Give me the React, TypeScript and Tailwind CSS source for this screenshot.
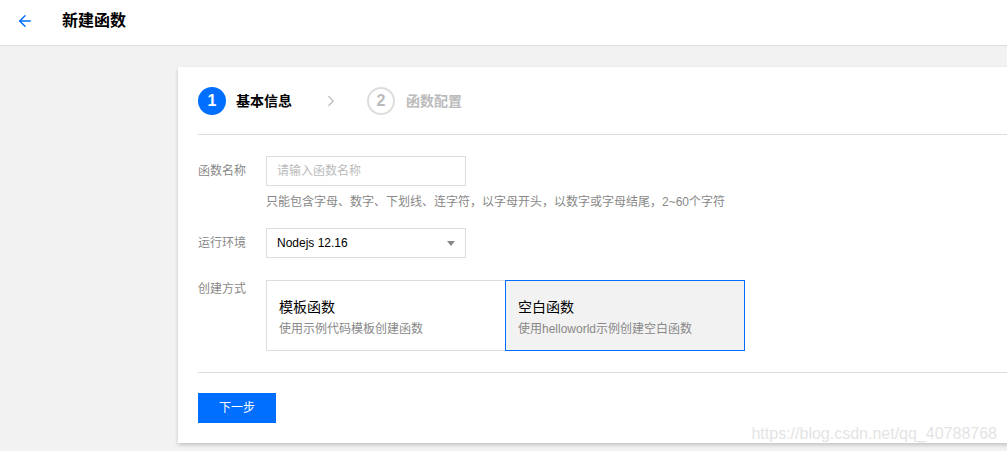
import { ArrowLeft, ChevronRight } from "lucide-react";

const FONT = "font-['Liberation_Sans','Noto_Sans_CJK_SC',sans-serif]";

function StepDot({ n, active }: { n: number; active?: boolean }) {
  return (
    <div
      className={`w-7 h-7 rounded-full flex items-center justify-center text-[16px] font-bold ${
        active ? "bg-[#006eff] text-white" : "border-2 border-[#ddd] text-[#bbb]"
      }`}
    >
      {n}
    </div>
  );
}

function ModeCard({ title, desc, selected }: { title: string; desc: string; selected?: boolean }) {
  return (
    <div
      className={`h-[71px] px-3 pt-[16px] ${
        selected ? "w-[240px] bg-[#f2f2f2] border border-[#006eff]" : "w-[239px] bg-white border border-[#ddd] border-r-0"
      }`}
    >
      <div className="text-[14px] leading-5 text-black">{title}</div>
      <div className="text-[12px] leading-5 mt-[2px] text-[#888]">{desc}</div>
    </div>
  );
}

export default function App() {
  return (
    <div className={`${FONT} relative w-[1007px] h-[451px] overflow-hidden bg-[#f2f2f2]`}>
      <div className="h-[46px] bg-white border-b border-[#ddd] flex items-center">
        <ArrowLeft className="ml-[16px] w-[18px] h-[18px] text-[#006eff] -mt-[4px]" strokeWidth={2} />
        <div className="ml-[28px] text-[16px] font-bold text-black -mt-[4px]">新建函数</div>
      </div>

      <div className="pl-[178px] pt-[21px]">
        <div className="w-[900px] h-[376px] bg-white shadow-[0_2px_4px_rgba(0,0,0,0.2)] pl-5 pt-5">
          <div className="flex items-center h-7">
            <StepDot n={1} active />
            <span className="ml-[10px] text-[14px] font-bold text-black">基本信息</span>
            <ChevronRight className="ml-[30px] w-[18px] h-[18px] text-[#bbb]" strokeWidth={1.6} />
            <div className="ml-[27px]">
              <StepDot n={2} />
            </div>
            <span className="ml-[11px] text-[14px] font-bold text-[#bbb]">函数配置</span>
          </div>
          <div className="mt-[19px] border-t border-[#ddd]" />

          <div className="mt-[21px] text-[12px]">
            <div className="flex">
              <div className="w-[68px] h-[30px] flex items-center text-[#888]">函数名称</div>
              <div>
                <div className="w-[200px] h-[30px] border border-[#ddd] px-[10px] flex items-center text-[#bbb]">
                  请输入函数名称
                </div>
                <div className="mt-[7px] leading-[18px] text-[#888]">
                  只能包含字母、数字、下划线、连字符，以字母开头，以数字或字母结尾，2~60个字符
                </div>
              </div>
            </div>

            <div className="flex mt-[17px]">
              <div className="w-[68px] h-[30px] flex items-center text-[#888]">运行环境</div>
              <div className="w-[200px] h-[30px] border border-[#ddd] pl-[10px] pr-[10px] flex items-center justify-between text-black">
                <span>Nodejs 12.16</span>
                <span className="w-0 h-0 border-l-[4px] border-r-[4px] border-t-[5px] border-l-transparent border-r-transparent border-t-[#888]" />
              </div>
            </div>

            <div className="flex mt-[22px]">
              <div className="w-[68px] leading-[18px] text-[#888]">创建方式</div>
              <div className="flex">
                <ModeCard title="模板函数" desc="使用示例代码模板创建函数" />
                <ModeCard title="空白函数" desc="使用helloworld示例创建空白函数" selected />
              </div>
            </div>
          </div>

          <div className="mt-[21px] border-t border-[#ddd]" />
          <button className="mt-[20px] w-[78px] h-[30px] bg-[#006eff] text-white text-[12px]">下一步</button>
        </div>
      </div>

      <div className="absolute right-[10px] top-[422px] text-[16px] text-[#e4e4e4] font-['Liberation_Sans',sans-serif]">
        https://blog.csdn.net/qq_40788768
      </div>
    </div>
  );
}
